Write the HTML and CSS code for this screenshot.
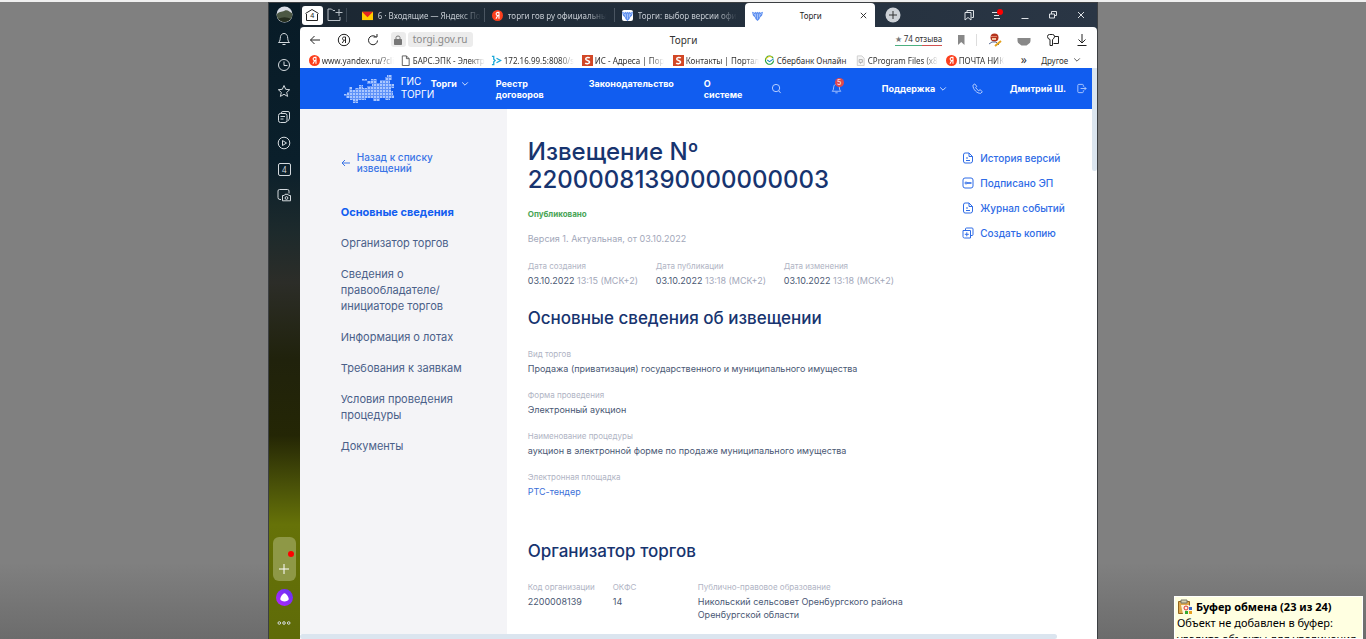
FILE: index.html
```html
<!DOCTYPE html>
<html lang="ru">
<head>
<meta charset="utf-8">
<title>Торги</title>
<link rel="stylesheet" href="styles.css">
</head>
<body>
<svg class="defs" aria-hidden="true">
  <symbol id="ya" viewBox="0 0 12 12"><circle cx="6" cy="6" r="6" fill="#fc3f1d"/><path d="M7.6 9.5V2.6H6.5C5.2 2.6 4.5 3.3 4.5 4.4S5.200 6.100 6.300 6.100H7.600M6.300 6.100L4.300 9.500" fill="none" stroke="#fff" stroke-width="1.200"/></symbol>
  <symbol id="eagle" viewBox="0 0 12 12"><path d="M0 2l3 1 1-1 1 1 1-1 1 1 1-1 1 1 3-1-1 4-2 2-1 2-2 2-2-2-1-2-2-2z" fill="#5b8def"/><path d="M4 4v4M6 4v6M8 4v4M1.500 3.500l2 2.500M10.500 3.500L8.500 6" stroke="#c9dcff" stroke-width=".7"/></symbol>
  <symbol id="sp" viewBox="0 0 11 11"><path d="M0 0h11v11H0z" fill="#d24726"/><path d="M7.800 3C7 2.200 3.700 2 3.700 3.900S7.600 5.200 7.600 7.100 4.100 9 3.200 8" fill="none" stroke="#fff" stroke-width="1.500"/></symbol>
  <symbol id="down" viewBox="0 0 10 10"><path d="M1.500 3L5 6.500 8.500 3" fill="none" stroke="currentColor"/></symbol>
  <symbol id="close" viewBox="0 0 10 10"><path d="M2 2l6 6M8 2l-6 6" fill="none" stroke="currentColor"/></symbol>
  <symbol id="bell" viewBox="0 0 14 14"><path d="M1.500 10.500C3.500 9 3 7 3.500 4.500 4 2.500 5.300 1.500 7 1.500s3 1 3.500 3c.5 2.500 0 4.500 2 6zM5.500 12.500h3" fill="none" stroke="currentColor"/></symbol>
  <symbol id="doc" viewBox="0 0 12 12"><path d="M3 1h4l3.500 3.500V9q0 2-2 2H3Q1.500 11 1.500 9V3Q1.500 1 3 1zM7 1v3.500h3.500M4 6h2M4 8.500h4" fill="none" stroke="currentColor"/></symbol>
</svg>
<div class="window">
  <aside class="dock">
    <button class="dock-btn" aria-label="Профиль"><svg viewBox="0 0 16 16"><circle cx="8" cy="8" r="7.500" fill="#d9dde6"/><path d="M.5 8C3 5 5 6 8 4.500S13 6 15.500 7A7.500 7.500 0 0 1 .5 8" fill="#4c5844"/><path d="M2 12q6-3 12 0A7.500 7.500 0 0 1 2 12" fill="#252e20"/></svg></button>
    <button class="dock-btn" aria-label="Уведомления"><svg viewBox="0 0 14 14"><use href="#bell"/></svg></button>
    <button class="dock-btn" aria-label="История"><svg viewBox="0 0 14 14"><circle cx="7" cy="7" r="5.500"/><path d="M7 3.500V7.500h3.500"/></svg></button>
    <button class="dock-btn" aria-label="Избранное"><svg viewBox="0 0 14 14"><path d="M7 1.500l1.700 3.800 4 .4-3 2.700.9 4L7 10.300l-3.600 2.100.9-4-3-2.700 4-.4z"/></svg></button>
    <button class="dock-btn" aria-label="Коллекции"><svg viewBox="0 0 14 14"><rect x="1.500" y="3.500" width="8.500" height="9" rx="2"/><path d="M4 3.500Q4 1.500 6 1.500h5q1.500 0 1.500 1.500v5q0 2-2 3M3.500 6.500h4.500M3.500 9h3"/></svg></button>
    <button class="dock-btn" aria-label="Видео"><svg viewBox="0 0 14 14"><circle cx="7" cy="7" r="5.800"/><path d="M5.500 4.500v5L9.500 7z"/></svg></button>
    <button class="dock-btn"><span class="count">4</span></button>
    <button class="dock-btn" aria-label="Снимок экрана"><svg viewBox="0 0 14 14"><path d="M4 11.500H3q-2 0-2-2V3q0-1.500 1.500-1.500h8Q12 1.500 12 3v2.500"/><path d="M5.500 7.500h1.700l.8-1.200h3l.8 1.200h1.700v5.300h-8z"/><circle cx="9.500" cy="10" r="1.400"/></svg></button>
    <button class="dock-add" aria-label="Добавить"><i class="dot"></i><svg viewBox="0 0 12 12"><path d="M6 1v10M1 6h10"/></svg></button>
    <button class="dock-btn dock-alice" aria-label="Алиса"><svg viewBox="0 0 18 18"><defs><linearGradient id="al" x1="0" y1="1" x2="1" y2="0"><stop stop-color="#b626ff"/><stop offset="1" stop-color="#5f35f0"/></linearGradient></defs><circle cx="9" cy="9" r="9" fill="url(#al)"/><path d="M9 4.500c2 0 4.500 4.500 4.500 6.200S11 13.200 9 13.200s-4.500-.8-4.500-2.500S7 4.500 9 4.500z" fill="#fff"/></svg></button>
    <button class="dock-btn" aria-label="Ещё"><svg viewBox="0 0 14 14"><circle cx="2.300" cy="7" r="1.300"/><circle cx="7" cy="7" r="1.300"/><circle cx="11.700" cy="7" r="1.300"/></svg></button>
  </aside>
  <div class="browser">
    <div class="tabs">
      <button class="home" aria-label="Группа вкладок: 4"><svg viewBox="0 0 16 14"><path d="M1.500 5.500L8 1.500l6.500 4M2.500 6v6.500h11V6" fill="none" stroke="#222"/></svg><span class="home-n">4</span></button>
      <button class="folder" aria-label="Новая группа"><svg viewBox="0 0 16 14"><path d="M8 2.500H6L4.500 1H1v11.500h12V9M12 1v7M8.500 4.500h7" fill="none" stroke="#b9c0c7"/></svg></button>
      <button class="tab"><svg viewBox="0 0 12 12"><path d="M0 2h12v9H0z" fill="#ffcc00"/><path d="M0 2h12L6 8z" fill="#e52620"/></svg><span>6 · Входящие — Яндекс По</span></button>
      <button class="tab"><svg viewBox="0 0 12 12"><use href="#ya"/></svg><span>торги гов ру официальны</span></button>
      <button class="tab"><svg class="tile" viewBox="0 0 12 12"><use href="#eagle"/></svg><span>Торги: выбор версии офи</span></button>
      <div class="tab-on"><svg viewBox="0 0 12 12"><use href="#eagle"/></svg><span>Торги</span><button aria-label="Закрыть вкладку"><svg viewBox="0 0 10 10"><use href="#close"/></svg></button></div>
      <button class="plus" aria-label="Новая вкладка"><svg viewBox="0 0 16 16"><circle cx="8" cy="8" r="7.500" fill="#cdd1d6"/><path d="M8 4v8M4 8h8" stroke="#333"/></svg></button>
      <div class="win-btns">
        <button aria-label="Панель"><svg viewBox="0 0 12 12"><path d="M4 3.500V1.500h6.500v7h-2M2 3.500h6V11L5 8.500 2 11z"/></svg></button>
        <button class="menu" aria-label="Меню"><svg viewBox="0 0 12 12"><path d="M1 3.500h6M3 6.500h5M3 9.500h6"/></svg><i class="dot"></i></button>
        <button aria-label="Свернуть"><svg viewBox="0 0 12 12"><path d="M2.500 9.500h7"/></svg></button>
        <button aria-label="Развернуть"><svg viewBox="0 0 12 12"><path d="M4.500 5V2.500h5v4H7.500M2.500 5H7.500v4H2.500z"/></svg></button>
        <button aria-label="Закрыть"><svg viewBox="0 0 12 12"><path d="M3 3l6 6M9 3l-6 6"/></svg></button>
      </div>
    </div>
    <div class="bar">
      <button aria-label="Назад"><svg viewBox="0 0 14 14"><path d="M12 7H2.500M6.500 3l-4 4 4 4"/></svg></button>
      <button aria-label="Яндекс"><svg viewBox="0 0 14 14"><circle cx="7" cy="7" r="5.700"/><path d="M8.500 10V4H7.300C6 4 5.500 4.700 5.500 5.600S6 7.200 7.300 7.200h1.200M7 7.200L5.300 10"/></svg></button>
      <button class="reload" aria-label="Обновить"><svg viewBox="0 0 14 14"><path d="M11.500 7.500A4.500 4.500 0 1 1 9.500 3.500M7.500 4h3.500V1"/></svg></button>
      <button class="lock" aria-label="Защищено"><svg viewBox="0 0 12 12"><path d="M2.500 5.500h7v5h-7z" fill="#777"/><path d="M4 5.500V3.500q0-1.500 2-1.500t2 1.500v2"/></svg></button>
      <button class="host">torgi.gov.ru</button>
      <strong class="page-title">Торги</strong>
      <a class="reviews" href="#"><span class="star">★</span> 74 отзыва</a>
      <div class="tools">
        <button class="mark" aria-label="В закладки"><svg viewBox="0 0 12 12"><path d="M3 1h6.500v10L6.200 8 3 11z" fill="#888" stroke="none"/></svg></button>
        <button aria-label="Расширение"><svg viewBox="0 0 14 14"><circle cx="6.500" cy="4.500" r="4" fill="#b5341c" stroke="none"/><path d="M3 3.500h6" stroke="#e0826a"/><path d="M4 6h4" stroke="#f2c5a0" stroke-width="2"/><path d="M1 11l3-2 4 0 3 3" stroke="#5c6c94"/><path d="M7 13l6-5" stroke="#e4a11b" stroke-width="2"/></svg></button>
        <button aria-label="Щит"><svg viewBox="0 0 14 14"><path d="M.5 5h13v3q0 2-2 3l-2 1.500h-5l-2-1.500q-2-1-2-3z" fill="#888" stroke="none"/></svg></button>
        <button aria-label="Пароли"><svg viewBox="0 0 14 14"><path d="M4 12.500V6.500Q1.500 6 1.500 3.500q0-2 2-2h3q2 0 2 2t-2 3v6H4M8.500 3.500h4v7h-5"/></svg></button>
        <button aria-label="Загрузки"><svg viewBox="0 0 14 14"><path d="M7 1v9M3.500 6.500L7 10l3.500-3.500M2.500 12.500h9"/></svg></button>
      </div>
    </div>
    <nav class="marks">
      <a href="#"><svg viewBox="0 0 12 12"><use href="#ya"/></svg><span>www.yandex.ru/?cli</span></a>
      <a href="#"><svg viewBox="0 0 12 12"><path d="M2.500 1h4.500l3 3v7.500H2.500zM7 1v3h3" fill="none" stroke="#555"/></svg><span>БАРС.ЭПК - Электр</span></a>
      <a href="#"><svg viewBox="0 0 12 12"><path d="M1 1.500h2v3l1.500 1.500L3 7.500v3H1M6 3.500L10.500 6 6 8.500" fill="none" stroke="#1ba8d8" stroke-width="1.400"/></svg><span>172.16.99.5:8080/s</span></a>
      <a href="#"><svg viewBox="0 0 11 11"><use href="#sp"/></svg><span>ИС - Адреса | Пор</span></a>
      <a href="#"><svg viewBox="0 0 11 11"><use href="#sp"/></svg><span>Контакты | Портал</span></a>
      <a href="#"><svg viewBox="0 0 12 12"><path d="M10 3.500A4.500 4.500 0 1 0 10.500 6" fill="none" stroke="#21a038" stroke-width="1.200"/><path d="M2 5A4.500 4.500 0 0 1 9 2.500" fill="none" stroke="#e2cc20" stroke-width="1.200"/><path d="M3.500 5.500L6 7.200l4.500-3" fill="none" stroke="#1c8bc0" stroke-width="1.200"/></svg><span class="full">Сбербанк Онлайн</span></a>
      <a href="#"><svg viewBox="0 0 12 12"><path d="M2.500 1h5l2.500 2.500v8H2.500z" fill="#f5f5f5" stroke="#ccc"/><path d="M4.500 5h3.500v3H4.500zM6 8v1.500" fill="none" stroke="#aaa"/></svg><span>CProgram Files (x8</span></a>
      <a class="last" href="#"><svg viewBox="0 0 12 12"><use href="#ya"/></svg><span>ПОЧТА НИК</span></a>
      <button class="more">»</button>
      <button class="other">Другое <svg viewBox="0 0 10 10"><use href="#down"/></svg></button>
    </nav>
    <div class="view">
      <div class="site">
        <header class="top">
          <svg class="map" viewBox="0 0 54 28" aria-hidden="true"><defs><pattern id="px" width="3" height="3" patternUnits="userSpaceOnUse"><path d="M0 0h2v2H0z" fill="#a9c6ff"/></pattern></defs><path id="ru" d="M0 21h3v-2h3v-2h2v-5h3v3h3v-2h4v-3h4v3h4v-2h5V9h-5V6h-5V4h5v2h4V4h6v4h3V5h5V2h2V0h5v5h-2v4h4v4h-3v3h2v4h1v3h-4v2h-5v-2h-5v3h-7v-3h-7v2h-8v3h-5v-3H9v-2H5v-2H0z" fill="#5f92f8"/><use href="#ru" fill="none"/><path d="M0 21h3v-2h3v-2h2v-5h3v3h3v-2h4v-3h4v3h4v-2h5V9h-5V6h-5V4h5v2h4V4h6v4h3V5h5V2h2V0h5v5h-2v4h4v4h-3v3h2v4h1v3h-4v2h-5v-2h-5v3h-7v-3h-7v2h-8v3h-5v-3H9v-2H5v-2H0z" fill="url(#px)"/></svg>
          <span class="brand">ГИС<br>ТОРГИ</span>
          <button class="nav nav-up">Торги <svg viewBox="0 0 10 10"><use href="#down"/></svg></button>
          <a class="nav nav-wrap" href="#">Реестр договоров</a>
          <a class="nav nav-up" href="#">Законодательство</a>
          <a class="nav nav-wrap" href="#">О системе</a>
          <button class="ico" aria-label="Поиск"><svg viewBox="0 0 12 12"><circle cx="5.500" cy="5.500" r="4"/><path d="M8.500 8.500L10.500 11"/></svg></button>
          <button class="ico alert" aria-label="Уведомления"><svg viewBox="0 0 14 14"><use href="#bell"/></svg><i class="badge">5</i></button>
          <button class="nav">Поддержка <svg viewBox="0 0 10 10"><use href="#down"/></svg></button>
          <button class="ico" aria-label="Телефон"><svg viewBox="0 0 12 12"><path d="M3 1L1 2.500C1 7 5.500 11.500 9.500 11.300L11.300 9.500 8.800 7.300 7.300 8.400Q4.800 7 4 4.800L5.200 3.700z"/></svg></button>
          <a class="nav user" href="#">Дмитрий Ш. <svg viewBox="0 0 12 12"><path d="M8 4V2.500Q8 1.500 7 1.500H3Q2 1.500 2 2.500v7q0 1 1 1h4q1 0 1-1V8M5 6h6M9 4l2 2-2 2" fill="none" stroke="currentColor"/></svg></a>
        </header>
        <div class="cols">
          <nav class="side">
            <a class="back" href="#"><svg viewBox="0 0 10 10"><path d="M9 5H1M4 2L1 5l3 3" fill="none" stroke="currentColor"/></svg>Назад к списку извещений</a>
            <a class="on" href="#">Основные сведения</a>
            <a href="#">Организатор торгов</a>
            <a href="#">Сведения о правообладателе/<wbr>инициаторе торгов</a>
            <a href="#">Информация о лотах</a>
            <a href="#">Требования к заявкам</a>
            <a href="#">Условия проведения процедуры</a>
            <a href="#">Документы</a>
          </nav>
          <main class="main">
            <div class="head">
              <h1>Извещение Nº 22000081390000000003</h1>
              <ul class="actions">
                <li><a href="#"><svg viewBox="0 0 12 12"><use href="#doc"/></svg>История версий</a></li>
                <li><a href="#"><svg viewBox="0 0 12 12"><rect x="1" y="1" width="10" height="10" rx="2" fill="none" stroke="currentColor"/><circle cx="4" cy="6" r="1" fill="none" stroke="currentColor"/><path d="M5 6h4.500" stroke="currentColor" stroke-width="1.600"/></svg>Подписано ЭП</a></li>
                <li><a href="#"><svg viewBox="0 0 12 12"><use href="#doc"/></svg>Журнал событий</a></li>
                <li><a href="#"><svg viewBox="0 0 12 12"><path d="M1 3.500h7.500V11H2.500Q1 11 1 9.500zM3.500 3.500V2Q3.500 1 4.500 1H10q1 0 1 1v5.500q0 1-1 1H8.500M4.800 5.300v4M2.800 7.300h4" fill="none" stroke="currentColor"/></svg>Создать копию</a></li>
              </ul>
            </div>
            <p class="status">Опубликовано</p>
            <p class="version">Версия 1. Актуальная, от 03.10.2022</p>
            <dl class="dates">
              <div><dt>Дата создания</dt><dd>03.10.2022 <small>13:15 (МСК+2)</small></dd></div>
              <div><dt>Дата публикации</dt><dd>03.10.2022 <small>13:18 (МСК+2)</small></dd></div>
              <div><dt>Дата изменения</dt><dd>03.10.2022 <small>13:18 (МСК+2)</small></dd></div>
            </dl>
            <h2>Основные сведения об извещении</h2>
            <dl class="facts">
              <div><dt>Вид торгов</dt><dd>Продажа (приватизация) государственного и муниципального имущества</dd></div>
              <div><dt>Форма проведения</dt><dd>Электронный аукцион</dd></div>
              <div><dt>Наименование процедуры</dt><dd>аукцион в электронной форме по продаже муниципального имущества</dd></div>
              <div><dt>Электронная площадка</dt><dd><a href="#">РТС-тендер</a></dd></div>
            </dl>
            <h2>Организатор торгов</h2>
            <dl class="org">
              <div><dt>Код организации</dt><dd>2200008139</dd></div>
              <div><dt>ОКФС</dt><dd>14</dd></div>
              <div><dt>Публично-правовое образование</dt><dd>Никольский сельсовет Оренбургского района Оренбургской области</dd></div>
            </dl>
          </main>
        </div>
      </div>
      <div class="vbar"><i></i></div>
    </div>
    <div class="hbar"><i></i></div>
  </div>
</div>
<div class="toast" role="status">
  <b><svg viewBox="0 0 16 16"><path d="M1.500 2.500h11v12h-11z" fill="#e0a84a" stroke="#94651c"/><path d="M4 1h6v3H4z" fill="#d8d2b0" stroke="#776"/><path d="M4 6h8l3 3v6H6z" fill="#fdf6df"/><circle cx="9" cy="9" r="2" fill="none" stroke="#d33"/><path d="M12 8h3v3h-3z" fill="#36c"/><path d="M8 12h3v3H8z" fill="#3a3"/><path d="M12 12h3v3h-3z" fill="#e8a020"/></svg>Буфер обмена (23 из 24)</b>
  <p>Объект не добавлен в буфер: удалите объекты для увеличения</p>
</div>
</body>
</html>
```
FILE: styles.css
```css
* { box-sizing: border-box; }
body {
  margin: 0;
  height: 100vh;
  overflow: hidden;
  position: relative;
  border-top: 2px solid #f0f0f0;
  background: linear-gradient(#808080 0 88%, #6c6c6c);
  font-family: "Noto Sans", sans-serif;
  font-size: 8px;
  color: #333;
}
.defs { position: absolute; width: 0; height: 0; }
button { border: 0; padding: 0; background: none; color: inherit; font: inherit; }
a { color: inherit; text-decoration: none; }
h1, h2, p, ul, dl, dd { margin: 0; padding: 0; }
ul { list-style: none; }
svg { display: block; flex: none; }
i { font-style: normal; }
.dot { width: 6px; height: 6px; border-radius: 50%; background: #f00; }

.window {
  width: 60.8%;
  height: 100%;
  margin: 0 auto;
  display: flex;
  border: 1px solid #3c3f42;
  border-width: 1px 1px 0;
}
.dock {
  flex: 0 0 31px;
  display: flex;
  flex-direction: column;
  align-items: center;
  padding-bottom: 3px;
  background: linear-gradient(#081b27 0, #0a1f2b 25%, #1d2a2c 36%, #2c2d28 44%, #20220c 56%, #242605 68%, #4a5208 76%, #667208 82%, #5f6b08);
}
.dock-btn { height: 26px; width: 100%; display: flex; align-items: center; justify-content: center; color: #d4dade; }
.dock-btn:first-child { height: 23px; }
.dock-btn svg { width: 14px; height: 14px; fill: none; stroke: currentColor; }
.dock-btn:first-child svg, .dock-alice svg { width: 17px; height: 17px; stroke: none; }
.count { width: 13px; height: 13px; border: 1px solid #d4dade; border-radius: 2px; line-height: 11px; }
.dock-add {
  width: 23px;
  height: 44px;
  margin-top: auto;
  margin-bottom: 3px;
  border-radius: 6px;
  background: #8e9846;
  display: flex;
  flex-direction: column;
  align-items: center;
  justify-content: flex-end;
  gap: 6px;
  padding-bottom: 6px;
}
.dock-add .dot { align-self: flex-end; margin-right: 2px; }
.dock-add svg { width: 12px; height: 12px; stroke: #fff; }

.browser { flex: 1; min-width: 0; display: flex; flex-direction: column; background: #263442; }
.tabs { height: 24px; flex: none; display: flex; align-items: center; padding-left: 2px; background: linear-gradient(90deg, #1b2732, #2a3645); color: #c5cbd2; }
.home { position: relative; width: 21px; height: 19px; background: #fff; border-radius: 3px; display: grid; place-items: center; color: #222; }
.home svg { width: 16px; height: 14px; }
.home-n { position: absolute; top: 5px; font-size: 7px; }
.folder { width: 24px; height: 14px; margin-right: 8px; padding-left: 4px; border-right: 1px solid #3c4854; }
.folder svg { width: 16px; height: 14px; }
.tab { width: 130px; height: 14px; padding: 0 6px 0 7px; display: flex; align-items: center; gap: 5px; border-right: 1px solid #4a5561; }
.tab svg, .tab-on svg { width: 11px; height: 11px; }
.tab .tile { background: #fff; border-radius: 2px; }
.tab span, .marks span { white-space: nowrap; mask-image: linear-gradient(90deg, #000 80%, transparent); }
.marks .full { mask-image: none; }
.tab:nth-child(5) { border: 0; }
.tab-on { width: 130px; height: 24px; padding: 0 7px; display: flex; align-items: center; justify-content: space-between; background: #fff; color: #222; border-radius: 4px 4px 0 0; }
.tab-on button svg { width: 9px; height: 9px; }
.plus { margin-left: 10px; }
.plus svg { width: 16px; height: 16px; }
.win-btns { margin-left: auto; display: flex; gap: 16px; padding-right: 10px; color: #dde1e5; }
.win-btns svg { width: 12px; height: 12px; fill: none; stroke: currentColor; }
.menu { position: relative; }
.menu .dot { position: absolute; top: 0; right: 0; }

.bar { height: 25px; flex: none; display: flex; align-items: center; padding: 0 8px; background: #fff; border-radius: 4px 4px 0 0; }
.bar svg { width: 14px; height: 14px; fill: none; stroke: #222; }
.bar > button { margin-right: 15px; }
.bar > .reload { margin-right: 11px; }
.bar > .lock { width: 15px; height: 15px; margin-right: 2px; background: #ececec; border-radius: 3px; display: grid; place-items: center; }
.lock svg, .bar .lock svg { width: 12px; height: 12px; stroke: #777; }
.bar > .host { height: 15px; padding: 0 5px; margin: 0; background: #ececec; border-radius: 3px; color: #8a8a8a; font-size: 10px; line-height: 15px; }
.page-title { flex: 1; text-align: center; font-size: 10px; font-weight: 400; }
.reviews { border-bottom: 1px solid #5fb98a; border-image: linear-gradient(90deg, #4cb080 58%, #d05050 58%) 1; line-height: 12px; }
.star { color: #777; }
.tools { display: flex; align-items: center; gap: 15px; margin-left: 13px; }
.mark { padding-right: 9px; margin-right: -4px; border-right: 1px solid #ddd; }
.bar .mark svg { width: 12px; height: 12px; }

.marks { height: 16px; flex: none; display: flex; align-items: center; padding: 0 16px 0 9px; background: #fff; }
.marks a { width: 91px; flex: none; padding-right: 9px; display: flex; align-items: center; gap: 2px; }
.marks .last { width: 68px; }
.marks a svg { width: 11px; height: 11px; }
.more { width: 20px; font-size: 12px; line-height: 14px; }
.other { margin-left: auto; display: flex; align-items: center; gap: 5px; }
.other svg { width: 8px; height: 8px; }

.view { flex: 1; min-height: 0; display: flex; background: #fff; }
.site { flex: 1; min-width: 0; display: flex; flex-direction: column; font-family: "Inter", sans-serif; overflow: hidden; }
.top {
  height: 41px;
  flex: none;
  display: grid;
  grid-template-columns: 60px 30px 65px 93px 115px 67px 60px 51px 90px 38px 1fr;
  align-items: center;
  padding-left: 41px;
  background: #115df0;
  color: #fff;
}
.map { width: 54px; height: 28px; }
.brand { font-size: 10px; line-height: 13px; padding-bottom: 2px; }
.nav { font-size: 9px; font-weight: 700; line-height: 11px; text-align: left; }
.top button.nav, .user { display: flex; align-items: center; gap: 4px; }
.nav svg { width: 8px; height: 8px; }
.user { justify-content: space-between; padding-right: 5px; white-space: nowrap; }
.user svg { width: 11px; height: 11px; color: #b4cdff; }
.nav-up { padding-bottom: 10px; }
.nav-wrap { padding-right: 22px; }
.ico svg { width: 11px; height: 11px; fill: none; stroke: #c5d8ff; }
.ico { justify-self: start; padding-right: 4px; color: #c5d8ff; }
.alert { position: relative; padding: 0; }
.badge { position: absolute; top: -5px; left: 4px; width: 9px; height: 9px; border-radius: 50%; background: #e0484d; color: #fff; font-size: 7px; line-height: 9px; text-align: center; }

.cols { flex: 1; min-height: 0; display: flex; }
.side { width: 207px; flex: none; padding: 43px 44px 0 41px; background: #f4f4f7; display: flex; flex-direction: column; gap: 15px; font-size: 11px; line-height: 16px; color: #4a6089; }
.side .back { display: flex; align-items: center; gap: 6px; margin-bottom: 15px; font-size: 10px; line-height: 11px; font-weight: 500; color: #3b74e6; }
.back svg { width: 10px; height: 10px; }
.side .on { font-weight: 700; color: #115df0; }
.main { flex: 1; min-width: 0; padding: 29px 28px 0 21px; color: #4a5874; }
.head { display: flex; justify-content: space-between; height: 55px; }
h1 { width: 330px; font-size: 24px; line-height: 28px; font-weight: 500; color: #17346f; }
.actions { width: 102px; padding-top: 14px; display: flex; flex-direction: column; gap: 13px; font-size: 10px; line-height: 12px; font-weight: 500; color: #2f6ce6; }
.actions a { display: flex; align-items: center; gap: 6px; white-space: nowrap; }
.actions svg { width: 12px; height: 12px; }
.status { margin-top: 14px; font-size: 8px; line-height: 14px; font-weight: 700; color: #4aa556; }
.version { margin-top: 11px; font-size: 9px; line-height: 14px; color: #a3a8ba; }
dt { font-size: 8px; line-height: 12px; color: #b0b4c4; }
dd { font-size: 9px; line-height: 13px; }
dd small { font-size: 9px; color: #a3a8ba; }
.dates { margin-top: 14px; display: grid; grid-template-columns: 128px 128px 1fr; }
h2 { margin-top: 21px; font-size: 17px; line-height: 20px; font-weight: 500; color: #17346f; }
dt + dd { margin-top: 2px; }
.facts { margin-top: 20px; display: grid; gap: 14px; }
.facts a { color: #3b6fd8; }
.facts + h2 { margin-top: 43px; }
.org { margin-top: 20px; display: grid; grid-template-columns: 85px 85px 220px; }

.vbar { width: 5px; flex: none; background: #fff; }
.vbar i { display: block; height: 103px; background: #dbe5ef; border-radius: 0 0 3px 3px; }
.hbar { height: 5px; flex: none; background: #fff; }
.hbar i { display: block; width: 95%; height: 5px; background: #dbe5ef; border-radius: 3px; }

.toast { position: absolute; right: 3px; bottom: 0; width: 189px; height: 43px; overflow: hidden; padding: 2px 2px 0; background: #ffffe1; border: 1px solid #fff; color: #000; font-size: 11px; line-height: 16px; }
.toast b { display: flex; align-items: center; gap: 3px; white-space: nowrap; }
.toast svg { width: 16px; height: 16px; }
```
